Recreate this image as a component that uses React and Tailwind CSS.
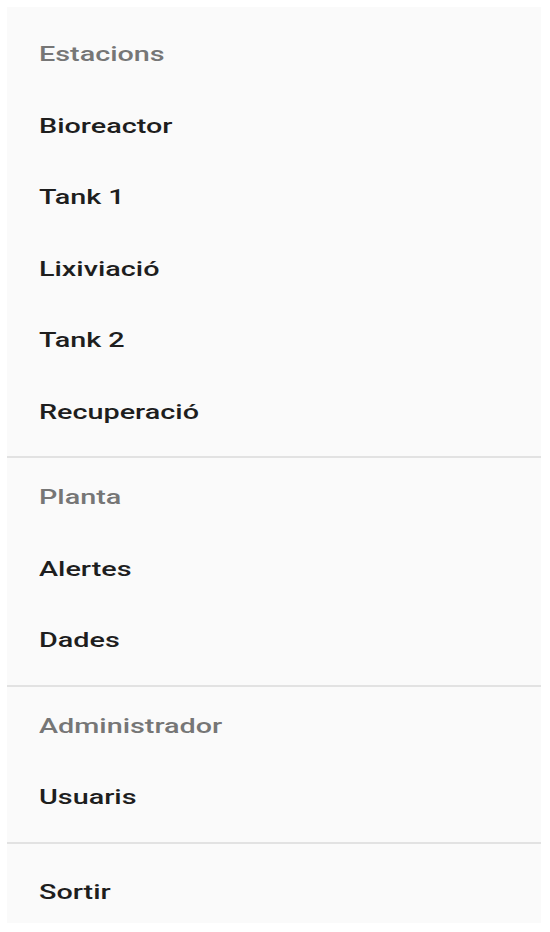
const sections = [
  {
    title: "Estacions",
    items: ["Bioreactor", "Tank 1", "Lixiviació", "Tank 2", "Recuperació"],
  },
  {
    title: "Planta",
    items: ["Alertes", "Dades"],
  },
  {
    title: "Administrador",
    items: ["Usuaris"],
  },
  {
    title: null,
    items: ["Sortir"],
  },
];

function Row({ label, header }) {
  return (
    <div className="flex h-[71.5px] items-center pl-[32px]">
      <span
        className={
          header
            ? "inline-block origin-left scale-x-[1.37] text-[21px] font-medium text-[#767676]"
            : "inline-block origin-left scale-x-[1.37] text-[21px] font-medium text-[#1e1e1e]"
        }
      >
        {label}
      </span>
    </div>
  );
}

export default function App() {
  return (
    <div
      className="h-[932px] w-[550px] bg-white pl-[7px] pt-[7px]"
      style={{ fontFamily: "Roboto, 'Noto Sans', sans-serif" }}
    >
      <div className="flex h-[916px] w-[534px] flex-col overflow-hidden bg-[#fafafa] pt-[12px]">
        {sections.map((section, i) => (
          <div key={i}>
            {i > 0 && <div className="mt-[8px] h-[2px] bg-[#e2e2e2]" />}
            <div className={section.title ? (i > 0 ? "pt-[4px]" : "") : "pt-[13px]"}>
              {section.title && <Row label={section.title} header />}
              {section.items.map((item) => (
                <Row key={item} label={item} />
              ))}
            </div>
          </div>
        ))}
      </div>
    </div>
  );
}
